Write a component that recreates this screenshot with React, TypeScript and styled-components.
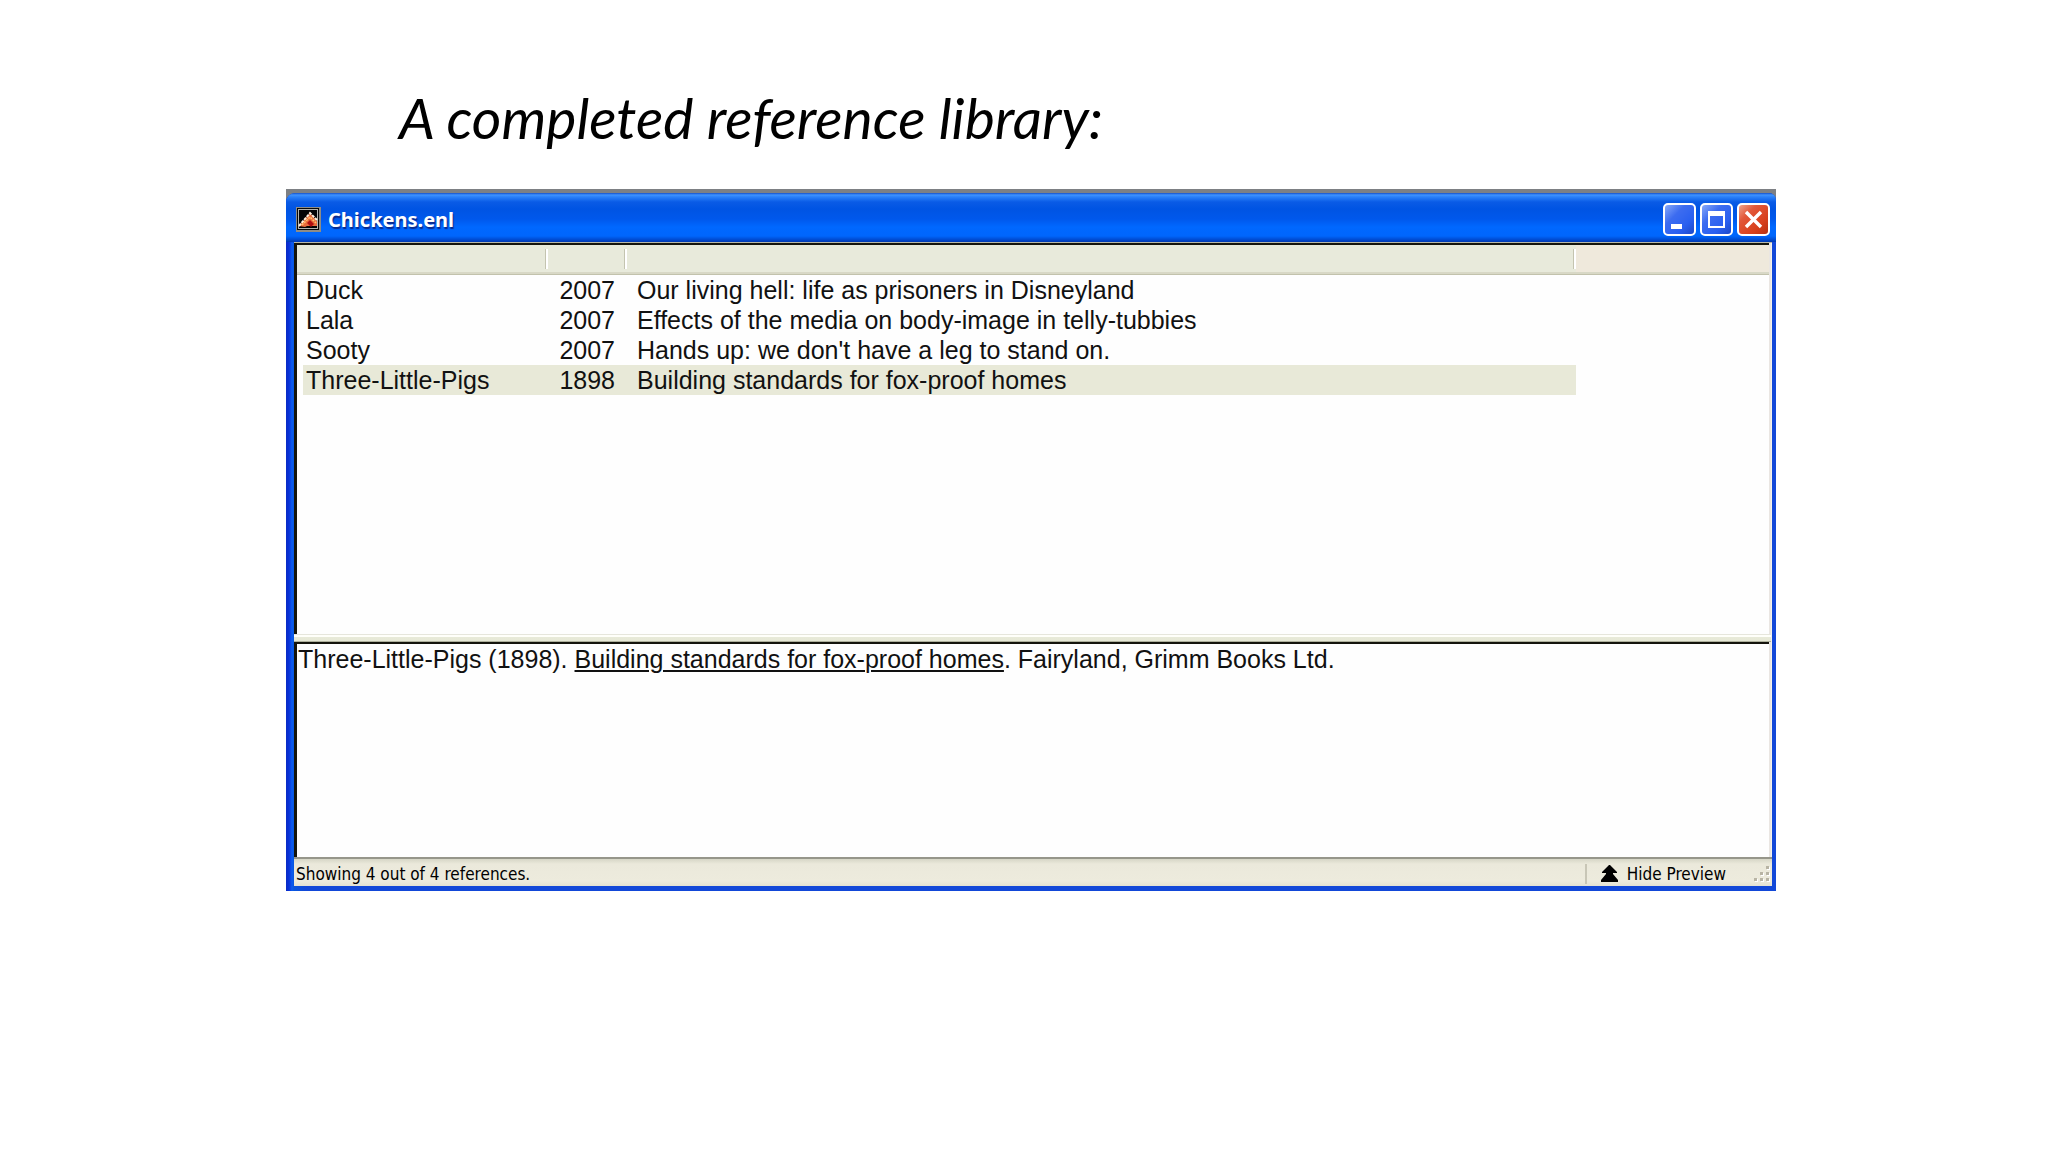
import React from "react";
import styled, { createGlobalStyle } from "styled-components";

const GlobalStyle = createGlobalStyle`
  * { box-sizing: border-box; }
  body { margin: 0; background: #fff; color: #000; }
`;

const Slide = styled.main`
  padding: 81px 272px 0 286px;
`;

const Heading = styled.h1`
  margin: 0;
  padding-left: 113px;
  font: italic 400 57px/72px Lato, Carlito, sans-serif;
`;

const Desktop = styled.section`
  margin-top: 36px;
  padding-top: 4px;
  background: #7d8084;
`;

const WindowFrame = styled.div`
  padding: 0 4px 5px 8px;
  border-radius: 9px 7px 0 0;
  background: linear-gradient(90deg, #0a2bc4 0, #0831d9 3px, #0a5cf0 6px, #0855dd 8px, #1248d8 20px);
`;

const TitleBar = styled.header`
  display: flex;
  align-items: center;
  gap: 7px;
  height: 49px;
  margin: 0 -4px 0 -8px;
  padding: 3px 6px 0 10px;
  border-radius: 9px 7px 0 0;
  background: linear-gradient(180deg, #1650c8 0, #3f93ff 2px, #2a80f8 4px, #0a5be6 9px, #0054e3 16px, #0058ec 26px, #0068ff 34px, #0066fc 43px, #0048cc 47px, #0038b0 49px);
`;

const WindowTitle = styled.h2`
  flex: 1;
  margin: 0;
  padding-top: 2px;
  color: #fff;
  font: 700 20px/28px "Noto Sans", "Open Sans", sans-serif;
  text-shadow: 1px 2px 1px #0a2a8c;
`;

const Controls = styled.div`
  display: flex;
  gap: 4px;
`;

const ControlButton = styled.button<{ $close?: boolean }>`
  display: grid;
  place-items: center;
  width: 33px;
  height: 33px;
  padding: 0;
  border: 2px solid #fff;
  border-radius: 5px;
  background: ${(p) =>
    p.$close
      ? "linear-gradient(135deg, #f0a48c 0, #e2583a 30%, #d8401c 70%, #b83010 100%)"
      : "linear-gradient(135deg, #86a8fa 0, #3c6cf0 35%, #2a60f0 70%, #1c48c8 100%)"};
`;

const Client = styled.div`
  padding-right: 1px;
  border-top: 1px solid #b8b8a8;
  background: #f4f2ea;
`;

const Pane = styled.div<{ $height: number }>`
  min-height: ${(p) => p.$height}px;
  margin-right: 2px;
  border-top: 2px solid #14140c;
  border-left: 3px solid #14140c;
  background: #fefefe;
  box-shadow: 2px 0 0 #eae6e2;
`;

const References = styled.table`
  width: 100%;
  table-layout: fixed;
  border-collapse: separate;
  border-spacing: 0;
  font: 25px/30px "Liberation Sans", Arial, sans-serif;
`;

const Column = styled.col<{ $width?: number }>`
  width: ${(p) => (p.$width ? `${p.$width}px` : "auto")};
`;

const HeaderCell = styled.th<{ $blank?: boolean }>`
  height: 30px;
  padding: 4px 0 5px;
  border-bottom: 1px solid #c2c2ac;
  background: ${(p) => (p.$blank ? "#efe9dc" : "#e8eadb")};
  box-shadow: inset 0 -2px 0 #d8d8c6;
`;

const Divider = styled.span`
  display: block;
  height: 20px;
  border-right: 2px solid #fff;
  box-shadow: inset -1px 0 0 #c4c4b0;
`;

const Row = styled.tr<{ $selected?: boolean }>`
  td { background: ${(p) => (p.$selected ? "#e8e9d8" : "transparent")}; background-clip: padding-box; }
  td:last-child { background: transparent; }
`;

const Cell = styled.td<{ $kind?: "first" | "year" }>`
  height: 30px;
  padding: ${(p) => (p.$kind === "first" ? "0 0 0 3px" : p.$kind === "year" ? "0 12px 0 0" : "0 0 0 10px")};
  border-left: ${(p) => (p.$kind === "first" ? "6px solid transparent" : "0")};
  text-align: ${(p) => (p.$kind === "year" ? "right" : "left")};
  color: #111;
  white-space: nowrap;
`;

const Splitter = styled.div`
  height: 8px;
  border-top: 1px solid #e6e6dc;
  background: linear-gradient(180deg, #fffffa 2px, #e8ead9 2px, #e6e8d6 6px, #aeb09c 6px);
`;

const Citation = styled.p`
  margin: 0;
  padding: 0 1px;
  color: #111;
  font: 25px/30px "Liberation Sans", Arial, sans-serif;
`;

const BookTitle = styled.u`
  text-decoration-thickness: 2px;
  text-underline-offset: 2px;
`;

const StatusBar = styled.footer`
  display: flex;
  align-items: center;
  height: 29px;
  margin-right: -1px;
  padding: 2px 2px 0;
  border-top: 2px solid #96968a;
  background: linear-gradient(180deg, #d6d6c6 0, #ebe9db 5px, #edebdd 22px, #e4e2d2 100%);
  font: 17px/24px "DejaVu Sans Condensed", Tahoma, sans-serif;
`;

const StatusText = styled.span`
  flex: 1;
`;

const PreviewToggle = styled.button`
  display: flex;
  align-items: center;
  gap: 9px;
  height: 20px;
  padding: 0 27px 0 14px;
  border: 0;
  border-left: 2px solid #c8c6b6;
  background: transparent;
  color: #000;
  font: 17px/20px "DejaVu Sans Condensed", Tahoma, sans-serif;
`;

const references = [
  { author: "Duck", year: 2007, title: "Our living hell: life as prisoners in Disneyland" },
  { author: "Lala", year: 2007, title: "Effects of the media on body-image in telly-tubbies" },
  { author: "Sooty", year: 2007, title: "Hands up: we don't have a leg to stand on." },
  { author: "Three-Little-Pigs", year: 1898, title: "Building standards for fox-proof homes", selected: true },
];

const LibraryIcon = () => (
  <svg width="25" height="25" viewBox="0 0 25 25" aria-hidden="true">
    <path d="M0 0h25v25H0z" fill="#8e8c86" />
    <path d="M1 1h22v22H1z" fill="#080808" />
    <path d="M2 2h20v20H2z" fill="#b4b4b0" />
    <path d="M3 3h18v18H3z" fill="#050505" />
    <path d="M3 19 14 6l7 8v5H11l-2 1z" fill="#e86a3c" />
    <path d="M3 19 14 6l7 7" fill="none" stroke="#fff0dc" strokeWidth="2" strokeDasharray="3 1" />
    <path d="m6 18 8-8 6 6" fill="none" stroke="#ffc46c" strokeWidth="1.5" strokeDasharray="2 1" />
    <path d="m11 16 3-3 4 4-3 3z" fill="#b01010" />
  </svg>
);

const MinimizeIcon = () => (
  <svg width="29" height="29" viewBox="0 0 29 29" aria-hidden="true">
    <path d="M6 19h11v5H6z" fill="#fff" />
  </svg>
);

const MaximizeIcon = () => (
  <svg width="29" height="29" viewBox="0 0 29 29" aria-hidden="true">
    <path d="M6 6h17v17H6zM8 11v10h13V11z" fill="#fff" fillRule="evenodd" />
  </svg>
);

const CloseIcon = () => (
  <svg width="29" height="29" viewBox="0 0 29 29" aria-hidden="true">
    <path d="m7 7 15 15M22 7 7 22" stroke="#fff" strokeWidth="3.4" />
  </svg>
);

const CollapseIcon = () => (
  <svg width="17" height="17" viewBox="0 0 17 17" aria-hidden="true">
    <path d="M8 0h1l7 7v1h-4v1l5 6v2H0v-2l5-6V8H1V7z" fill="#000" />
  </svg>
);

const SizeGrip = () => (
  <svg width="17" height="18" viewBox="0 0 17 18" aria-hidden="true">
    {[[13, 1], [7, 7], [13, 7], [1, 13], [7, 13], [13, 13]].map(([x, y]) => (
      <g key={`${x}-${y}`}>
        <rect x={x + 1} y={y + 1} width="3" height="3" fill="#fff" />
        <rect x={x} y={y} width="3" height="3" fill="#b8b4a4" />
      </g>
    ))}
  </svg>
);

export default function App() {
  return (
    <Slide>
      <GlobalStyle />
      <Heading>A completed reference library:</Heading>
      <Desktop>
        <WindowFrame>
          <TitleBar>
            <LibraryIcon />
            <WindowTitle>Chickens.enl</WindowTitle>
            <Controls>
              <ControlButton aria-label="Minimize"><MinimizeIcon /></ControlButton>
              <ControlButton aria-label="Maximize"><MaximizeIcon /></ControlButton>
              <ControlButton aria-label="Close" $close><CloseIcon /></ControlButton>
            </Controls>
          </TitleBar>
          <Client>
            <Pane $height={391}>
              <References>
                <colgroup>
                  <Column $width={251} />
                  <Column $width={79} />
                  <Column />
                  <Column $width={193} />
                </colgroup>
                <thead>
                  <tr>
                    <HeaderCell aria-label="Author"><Divider /></HeaderCell>
                    <HeaderCell aria-label="Year"><Divider /></HeaderCell>
                    <HeaderCell aria-label="Title"><Divider /></HeaderCell>
                    <HeaderCell $blank />
                  </tr>
                </thead>
                <tbody>
                  {references.map((r) => (
                    <Row key={r.author} $selected={r.selected}>
                      <Cell $kind="first">{r.author}</Cell>
                      <Cell $kind="year">{r.year}</Cell>
                      <Cell>{r.title}</Cell>
                      <Cell />
                    </Row>
                  ))}
                </tbody>
              </References>
            </Pane>
            <Splitter />
            <Pane $height={215}>
              <Citation>
                Three-Little-Pigs (1898). <BookTitle>Building standards for fox-proof homes</BookTitle>. Fairyland, Grimm
                Books Ltd.
              </Citation>
            </Pane>
            <StatusBar>
              <StatusText>Showing 4 out of 4 references.</StatusText>
              <PreviewToggle>
                <CollapseIcon />
                Hide Preview
              </PreviewToggle>
              <SizeGrip />
            </StatusBar>
          </Client>
        </WindowFrame>
      </Desktop>
    </Slide>
  );
}
